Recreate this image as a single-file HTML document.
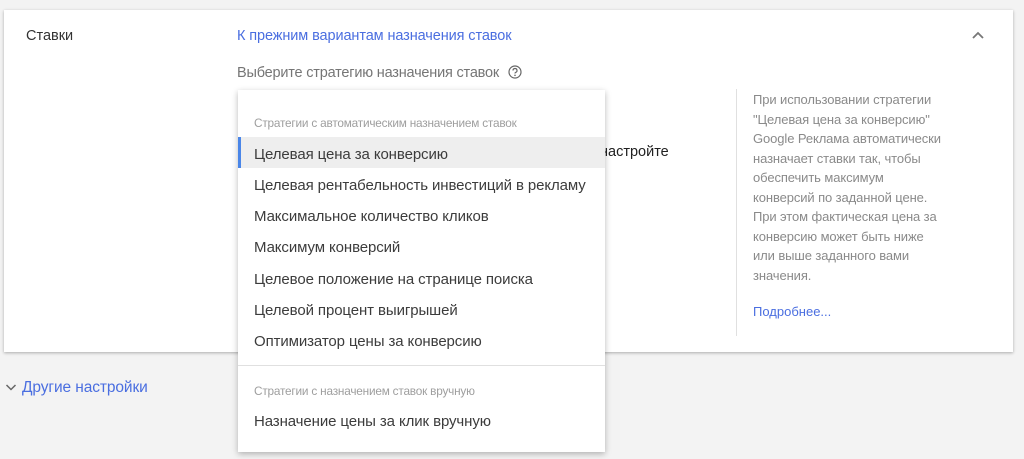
<!DOCTYPE html>
<html><head><meta charset="utf-8"><style>
*{margin:0;padding:0;box-sizing:border-box}
body{width:1024px;height:459px;background:#f3f3f3;font-family:"Liberation Sans",sans-serif;position:relative;overflow:hidden;color:#212121}
.card{position:absolute;left:4px;top:10px;width:1009px;height:342px;background:#fff;box-shadow:0 1px 3px rgba(0,0,0,.3)}
.abs{position:absolute;white-space:nowrap}
.menu{position:absolute;left:238px;top:90px;width:367px;height:362px;background:#fff;box-shadow:0 2px 6px rgba(0,0,0,.28)}
.hdr{position:absolute;left:16px;font-size:11.8px;color:#9e9e9e;letter-spacing:-.2px}
.it{position:absolute;left:0;width:367px;height:31px;line-height:31px;padding-left:16px;font-size:15px;color:#3c3c3c;letter-spacing:-.1px}
.help{font-size:13px;color:#8a8a8a;line-height:19.5px;letter-spacing:-.1px}
</style></head><body>
<div class="card">
<div class="abs" style="left:22px;top:18px;font-size:14.5px;color:#333">Ставки</div>
<div class="abs" style="left:233px;top:18px;font-size:14.5px;color:#4a6ee0;letter-spacing:-.1px">К прежним вариантам назначения ставок</div>
<div class="abs" style="left:233px;top:55px;font-size:14.5px;color:#757575;letter-spacing:-.2px">Выберите стратегию назначения ставок</div>
<svg class="abs" style="left:504px;top:55px" width="14" height="14" viewBox="0 0 14 14"><circle cx="7" cy="7" r="6" fill="none" stroke="#666" stroke-width="1.2"/><path d="M5 5.5a2 2 0 1 1 2.6 1.9c-.5.2-.6.5-.6 1.1" fill="none" stroke="#666" stroke-width="1.2"/><circle cx="7" cy="10.3" r=".8" fill="#666"/></svg>
<svg class="abs" style="left:967px;top:20px" width="14" height="10" viewBox="0 0 14 10"><path d="M2 8l5-5 5 5" fill="none" stroke="#777" stroke-width="1.8"/></svg>
<div class="abs" style="left:596px;top:134px;font-size:14.5px;color:#212121">настройте</div>
<div class="abs" style="left:732px;top:79px;width:1px;height:247px;background:#e0e0e0"></div>
<div class="abs help" style="left:749px;top:80px">При использовании стратегии<br>"Целевая цена за конверсию"<br>Google Реклама автоматически<br>назначает ставки так, чтобы<br>обеспечить максимум<br>конверсий по заданной цене.<br>При этом фактическая цена за<br>конверсию может быть ниже<br>или выше заданного вами<br>значения.</div>
<div class="abs" style="left:749px;top:294px;font-size:13px;color:#4a6ee0">Подробнее...</div>
</div>
<svg class="abs" style="left:5px;top:383px" width="12" height="8" viewBox="0 0 12 8"><path d="M1.5 2l4.5 4.5 4.5-4.5" fill="none" stroke="#666" stroke-width="1.5"/></svg>
<div class="abs" style="left:22px;top:379px;font-size:15.5px;color:#4a6ee0;letter-spacing:-.1px">Другие настройки</div>
<div class="menu">
<div class="hdr" style="top:26px">Стратегии с автоматическим назначением ставок</div>
<div class="it" style="top:47px;background:#eeeeee;border-left:3px solid #4a86e8;padding-left:13px;padding-top:2px">Целевая цена за конверсию</div>
<div class="it" style="top:80px">Целевая рентабельность инвестиций в рекламу</div>
<div class="it" style="top:111px">Максимальное количество кликов</div>
<div class="it" style="top:142px">Максимум конверсий</div>
<div class="it" style="top:174px">Целевое положение на странице поиска</div>
<div class="it" style="top:205px">Целевой процент выигрышей</div>
<div class="it" style="top:236px">Оптимизатор цены за конверсию</div>
<div style="position:absolute;left:0;top:275px;width:367px;height:1px;background:#e0e0e0"></div>
<div class="hdr" style="top:294px">Стратегии с назначением ставок вручную</div>
<div class="it" style="top:316px">Назначение цены за клик вручную</div>
</div>
</body></html>
